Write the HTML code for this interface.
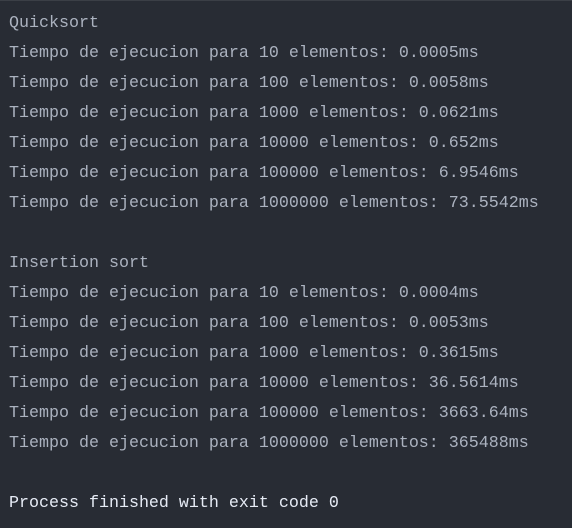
<!DOCTYPE html>
<html><head><meta charset="utf-8"><style>
html,body{margin:0;padding:0;}
body{width:572px;height:528px;background:#282c34;overflow:hidden;position:relative;border-top:1px solid #3b3f46;box-sizing:border-box;}
pre{margin:0;position:absolute;left:9px;top:8px;font-family:"Liberation Mono",monospace;font-size:16.67px;line-height:30px;color:#abb2bf;}
.w{color:#e6ebf5;}
</style></head><body><pre>Quicksort
Tiempo de ejecucion para 10 elementos: 0.0005ms
Tiempo de ejecucion para 100 elementos: 0.0058ms
Tiempo de ejecucion para 1000 elementos: 0.0621ms
Tiempo de ejecucion para 10000 elementos: 0.652ms
Tiempo de ejecucion para 100000 elementos: 6.9546ms
Tiempo de ejecucion para 1000000 elementos: 73.5542ms

Insertion sort
Tiempo de ejecucion para 10 elementos: 0.0004ms
Tiempo de ejecucion para 100 elementos: 0.0053ms
Tiempo de ejecucion para 1000 elementos: 0.3615ms
Tiempo de ejecucion para 10000 elementos: 36.5614ms
Tiempo de ejecucion para 100000 elementos: 3663.64ms
Tiempo de ejecucion para 1000000 elementos: 365488ms

<span class="w">Process finished with exit code 0</span></pre></body></html>
